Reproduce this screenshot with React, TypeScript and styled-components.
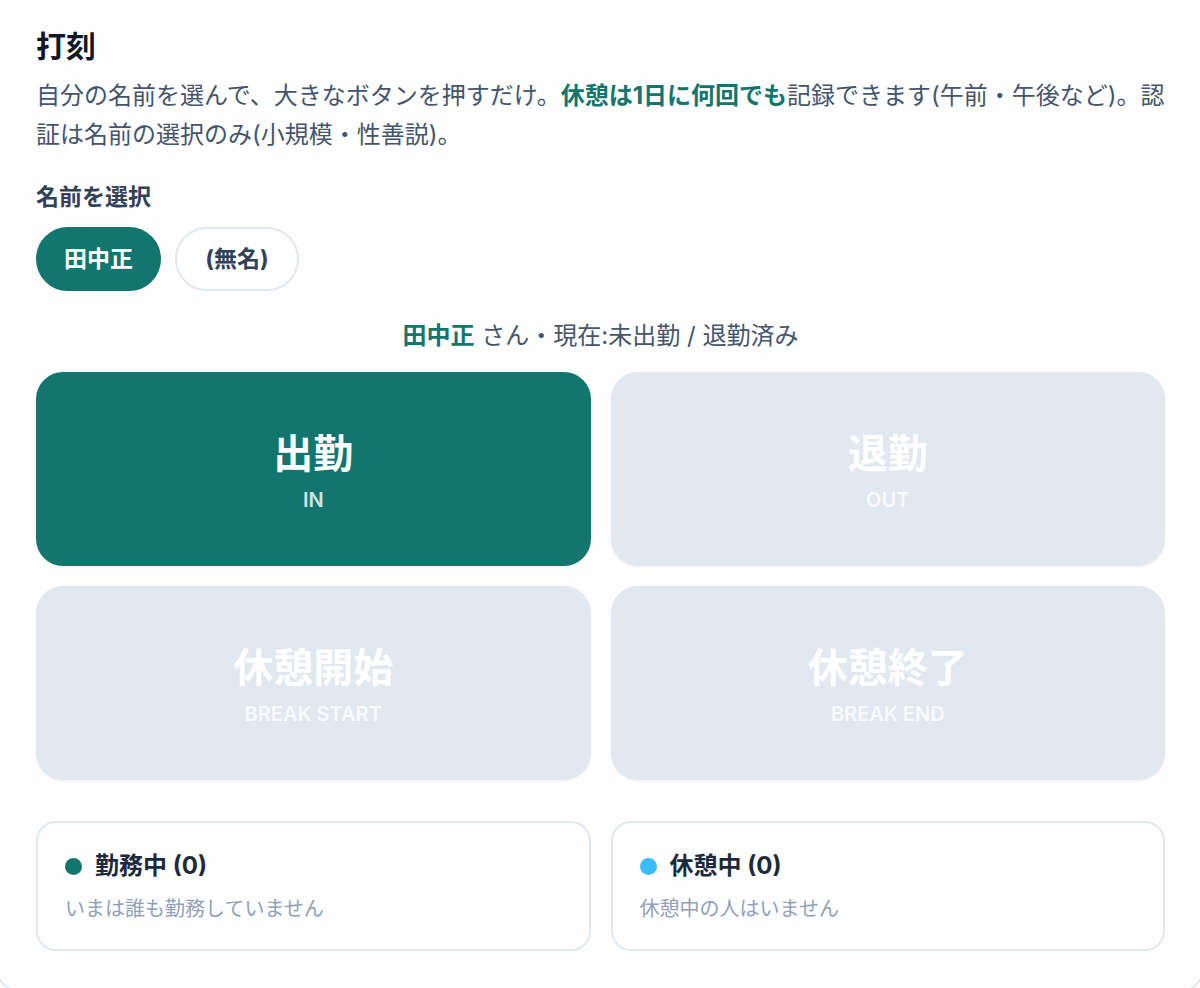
import { useState } from 'react'
import styled, { createGlobalStyle } from 'styled-components'

type PunchType = 'in' | 'out' | 'breakStart' | 'breakEnd'
type Status = 'off' | 'working' | 'break'

interface Member {
    id: number
    name: string
}

const members: Member[] = [
    { id: 1, name: '田中正' },
    { id: 2, name: '' }
]

const punches: { type: PunchType; label: string; sub: string; from: Status; to: Status }[] = [
    { type: 'in', label: '出勤', sub: 'IN', from: 'off', to: 'working' },
    { type: 'out', label: '退勤', sub: 'OUT', from: 'working', to: 'off' },
    { type: 'breakStart', label: '休憩開始', sub: 'BREAK START', from: 'working', to: 'break' },
    { type: 'breakEnd', label: '休憩終了', sub: 'BREAK END', from: 'break', to: 'working' }
]

const statusLabels: Record<Status, string> = {
    off: '未出勤 / 退勤済み',
    working: '勤務中',
    break: '休憩中'
}

const GlobalStyle = createGlobalStyle`
    *, *::before, *::after {
        box-sizing: border-box;
    }

    body {
        margin: 0;
        background-color: #fff;
        color: #45556c;
        font-family: Inter, 'Noto Sans CJK JP', sans-serif;
        font-size: 24px;
        -webkit-font-smoothing: antialiased;
    }

    h1, h2, p {
        margin: 0;
    }

    button {
        font-family: inherit;
        cursor: pointer;
    }
`

const Page = styled.main`
    overflow: hidden;
`

// The panel bleeds slightly past both sides of the window
const Panel = styled.section`
    margin: 0 -5px;
    padding: 26px 38px 40px 39px;
    border: 2px solid #e2e8f0;
    border-top: none;
    border-radius: 0 0 27px 27px;
    background-color: #fefefe;
`

const Title = styled.h1`
    color: #0f172b;
    font-size: 30px;
    font-weight: 700;
    line-height: 40px;
`

const Description = styled.p`
    margin-top: 10px;
    margin-right: -4px;
    line-height: 39px;
`

const Accent = styled.strong`
    color: #13766e;
    font-weight: 700;
`

const PickerLabel = styled.h2`
    margin-top: 27px;
    color: #314158;
    font-size: 23px;
    font-weight: 700;
    line-height: 32px;
`

const NameList = styled.div`
    display: flex;
    flex-wrap: wrap;
    gap: 14px;
    margin-top: 14px;
`

const NameButton = styled.button<{ $selected: boolean }>`
    min-width: 124px;
    padding: 14px 26px;
    border: 2px solid ${({ $selected }) => ($selected ? '#13766e' : '#e2e8f0')};
    border-radius: 32px;
    background-color: ${({ $selected }) => ($selected ? '#13766e' : '#fff')};
    color: ${({ $selected }) => ($selected ? '#fff' : '#314158')};
    font-size: 23px;
    font-weight: 700;
    line-height: 32px;
`

const Current = styled.p`
    margin-top: 28px;
    line-height: 34px;
    text-align: center;
`

const Grid = styled.div<{ $top: number }>`
    display: grid;
    grid-template-columns: 1fr 1fr;
    gap: 20px;
    margin-top: ${({ $top }) => $top}px;
`

const PunchButton = styled.button`
    display: flex;
    flex-direction: column;
    align-items: center;
    gap: 8px;
    padding: 58px 20px 52px;
    border: none;
    border-radius: 27px;
    background-color: #13766e;
    color: #fff;
    box-shadow: 0 1px 3px rgba(0, 0, 0, 0.06);

    &:disabled {
        background-color: #e2e8f0;
        cursor: not-allowed;
    }
`

const PunchLabel = styled.span`
    font-size: 40px;
    font-weight: 700;
    line-height: 48px;
`

const PunchSub = styled.span`
    font-size: 20px;
    font-weight: 600;
    line-height: 28px;
    opacity: 0.8;
`

const Card = styled.section`
    padding: 26px 27px;
    border: 2px solid #e2e8f0;
    border-radius: 20px;
`

const CardTitle = styled.h2`
    display: flex;
    align-items: center;
    gap: 13px;
    color: #1d293d;
    font-size: 24px;
    font-weight: 700;
    line-height: 34px;
`

const Dot = styled.span<{ $color: string }>`
    width: 17px;
    height: 17px;
    border-radius: 50%;
    background-color: ${({ $color }) => $color};
`

const CardText = styled.p`
    margin-top: 12px;
    color: #90a1b9;
    font-size: 20px;
    line-height: 28px;
`

const displayName = (member: Member) => member.name || '(無名)'

interface PresenceCardProps {
    title: string
    color: string
    people: Member[]
    emptyText: string
}

function PresenceCard({ title, color, people, emptyText }: PresenceCardProps) {
    return (
        <Card>
            <CardTitle>
                <Dot $color={color} />
                {title} ({people.length})
            </CardTitle>
            <CardText>{people.length > 0 ? people.map(displayName).join('、') : emptyText}</CardText>
        </Card>
    )
}

export default function App() {
    const [selectedId, setSelectedId] = useState(1)
    const [statuses, setStatuses] = useState<Record<number, Status>>({ 1: 'off', 2: 'off' })

    const selected = members.find(member => member.id === selectedId)!
    const status = statuses[selectedId]

    return (
        <Page lang="ja">
            <GlobalStyle />
            <Panel>
                <Title>打刻</Title>
                <Description>
                    自分の名前を選んで、大きなボタンを押すだけ。<Accent>休憩は1日に何回でも</Accent>
                    記録できます(午前・午後など)。認証は名前の選択のみ(小規模・性善説)。
                </Description>

                <PickerLabel id="name-label">名前を選択</PickerLabel>
                <NameList role="group" aria-labelledby="name-label">
                    {members.map(member => (
                        <NameButton
                            key={member.id}
                            type="button"
                            $selected={member.id === selectedId}
                            aria-pressed={member.id === selectedId}
                            onClick={() => setSelectedId(member.id)}
                        >
                            {displayName(member)}
                        </NameButton>
                    ))}
                </NameList>

                <Current>
                    <Accent>{displayName(selected)}</Accent> さん・現在:{statusLabels[status]}
                </Current>

                <Grid $top={19}>
                    {punches.map(punch => (
                        <PunchButton
                            key={punch.type}
                            type="button"
                            disabled={status !== punch.from}
                            onClick={() => setStatuses({ ...statuses, [selectedId]: punch.to })}
                        >
                            <PunchLabel>{punch.label}</PunchLabel>
                            <PunchSub>{punch.sub}</PunchSub>
                        </PunchButton>
                    ))}
                </Grid>

                <Grid $top={41}>
                    <PresenceCard
                        title="勤務中"
                        color="#13766e"
                        people={members.filter(member => statuses[member.id] === 'working')}
                        emptyText="いまは誰も勤務していません"
                    />
                    <PresenceCard
                        title="休憩中"
                        color="#3abdf8"
                        people={members.filter(member => statuses[member.id] === 'break')}
                        emptyText="休憩中の人はいません"
                    />
                </Grid>
            </Panel>
        </Page>
    )
}
